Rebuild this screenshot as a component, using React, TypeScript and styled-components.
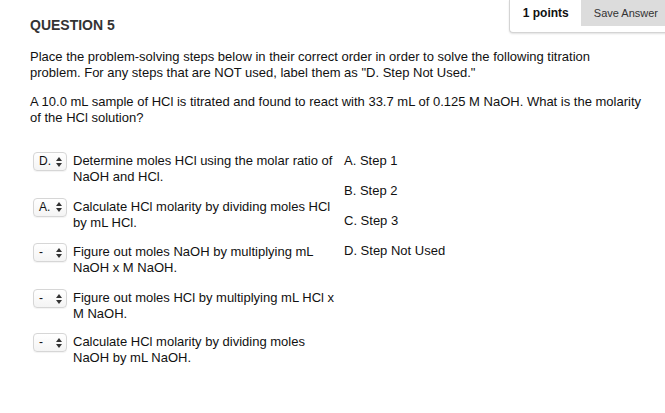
import React from 'react';
import styled, { createGlobalStyle } from 'styled-components';

const GlobalStyle = createGlobalStyle`
  html, body {
    margin: 0;
    padding: 0;
    background: #ffffff;
    font-family: "Liberation Sans", Arial, Helvetica, sans-serif;
    color: #111;
  }
`;

const Page = styled.div`
  width: 665px;
  height: 413px;
  overflow: hidden;
  background: #ffffff;
`;

const TopBar = styled.div`
  display: flex;
  justify-content: space-between;
  align-items: flex-start;
`;

const Title = styled.h2`
  margin: 17px 0 0 30px;
  font-size: 14px;
  line-height: 16px;
  font-weight: bold;
  color: #333;
`;

const PointsBox = styled.div`
  display: flex;
  margin-left: auto;
  margin-right: -10px;
  padding-bottom: 6px;
  border-left: 1px solid #d4d4d4;
  border-bottom: 1px solid #d4d4d4;
  border-bottom-left-radius: 4px;
  box-shadow: 0 1px 2px rgba(0, 0, 0, 0.12);
  background: #ffffff;
`;

const Points = styled.span`
  padding: 0 12px 0 13px;
  line-height: 26px;
  font-size: 12px;
  font-weight: bold;
  color: #111;
`;

const SaveButton = styled.span`
  padding: 0 17px 0 13px;
  line-height: 26px;
  font-size: 11px;
  color: #333;
  background: #dcdcdc;
`;

const Content = styled.div`
  width: 612px;
  padding: 16px 0 0 30px;
`;

const Paragraph = styled.p`
  margin: 0 0 13px;
  font-size: 13px;
  line-height: 16px;
  color: #111;
`;

const StepsGrid = styled.div`
  display: grid;
  grid-template-columns: auto auto;
  justify-content: start;
  margin-top: 24px;
`;

const StepRow = styled.div<{ $row: number }>`
  grid-column: 1;
  grid-row: ${(p) => p.$row};
  display: flex;
  align-items: flex-start;
  padding: 3px 0 9px 3px;
`;

const FakeSelect = styled.div`
  display: flex;
  align-items: center;
  justify-content: space-between;
  box-sizing: border-box;
  width: 34px;
  height: 19px;
  margin-top: -1px;
  padding: 0 4px 0 5px;
  border: 1px solid #d6d6d6;
  border-radius: 4px;
  background: linear-gradient(#ffffff, #f4f4f4);
  box-shadow: 0 1px 1px rgba(0, 0, 0, 0.05);
  font-size: 12px;
  color: #111;
`;

const SelectValue = styled.span`
  line-height: 17px;
`;

const StepText = styled.span`
  width: 264px;
  margin-left: 6px;
  font-size: 13px;
  line-height: 16px;
  color: #111;
`;

const AnswerList = styled.ol`
  grid-column: 2;
  grid-row: 1 / span 3;
  list-style: none;
  margin: 0;
  padding: 3px 0 14px 7px;
`;

const AnswerItem = styled.li`
  padding-bottom: 14px;
  font-size: 13px;
  line-height: 16px;
  color: #111;
`;

const Arrows = () => (
  <svg width="6" height="10" viewBox="0 0 6 10">
    <path d="M0 4 L3 0 L6 4 Z" fill="#333" />
    <path d="M0 6 L3 10 L6 6 Z" fill="#333" />
  </svg>
);

const steps = [
  { value: 'D.', text: 'Determine moles HCl using the molar ratio of NaOH and HCl.' },
  { value: 'A.', text: 'Calculate HCl molarity by dividing moles HCl by mL HCl.' },
  { value: '-', text: 'Figure out moles NaOH by multiplying mL NaOH x M NaOH.' },
  { value: '-', text: 'Figure out moles HCl by multiplying mL HCl x M NaOH.' },
  { value: '-', text: 'Calculate HCl molarity by dividing moles NaOH by mL NaOH.' },
];

const answers = ['A. Step 1', 'B. Step 2', 'C. Step 3', 'D. Step Not Used'];

export default function App() {
  return (
    <Page>
      <GlobalStyle />
      <TopBar>
        <Title>QUESTION 5</Title>
        <PointsBox>
          <Points>1 points</Points>
          <SaveButton>Save Answer</SaveButton>
        </PointsBox>
      </TopBar>
      <Content>
        <Paragraph>
          Place the problem-solving steps below in their correct order in order to solve the following titration
          problem. For any steps that are NOT used, label them as "D. Step Not Used."
        </Paragraph>
        <Paragraph>
          A 10.0 mL sample of HCl is titrated and found to react with 33.7 mL of 0.125 M NaOH. What is the molarity
          of the HCl solution?
        </Paragraph>
        <StepsGrid>
          {steps.map((s, i) => (
            <StepRow key={i} $row={i + 1}>
              <FakeSelect>
                <SelectValue>{s.value}</SelectValue>
                <Arrows />
              </FakeSelect>
              <StepText>{s.text}</StepText>
            </StepRow>
          ))}
          <AnswerList>
            {answers.map((a) => (
              <AnswerItem key={a}>{a}</AnswerItem>
            ))}
          </AnswerList>
        </StepsGrid>
      </Content>
    </Page>
  );
}
